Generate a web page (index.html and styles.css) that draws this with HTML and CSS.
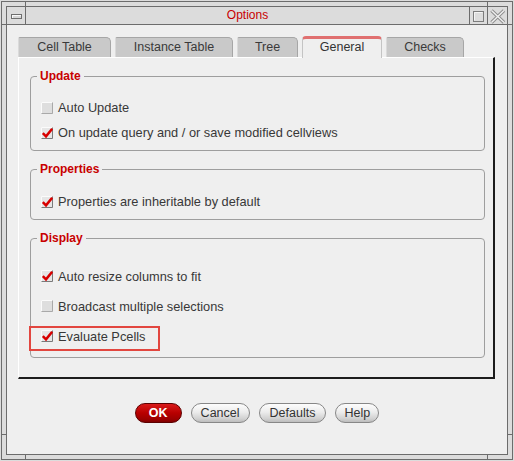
FILE: index.html
```html
<!DOCTYPE html>
<html>
<head>
<meta charset="utf-8">
<title>Options</title>
<link rel="stylesheet" href="styles.css">
</head>
<body>
<div class="window">
  <span class="tick tick-v tick-top-l"></span>
  <span class="tick tick-v tick-top-r"></span>
  <span class="tick tick-v tick-bot-l"></span>
  <span class="tick tick-v tick-bot-r"></span>
  <span class="tick tick-h tick-left-t"></span>
  <span class="tick tick-h tick-right-t"></span>
  <span class="tick tick-h tick-left-b"></span>
  <span class="tick tick-h tick-right-b"></span>
  <div class="frame-inner">
    <div class="titlebar">
      <div class="tb-menu"><span class="menu-glyph"></span></div>
      <div class="tb-title">Options</div>
      <div class="tb-btn tb-max">
        <svg width="17" height="17" viewBox="0 0 17 17"><rect x="3.5" y="4.5" width="10" height="10" fill="none" stroke="#7c7c7c"/><path d="M4.5 13.5V5.5H12.5" fill="none" stroke="#f4f4f4"/></svg>
      </div>
      <div class="tb-btn tb-close">
        <svg width="19" height="17" viewBox="0 0 19 17"><path d="M3.5 3.5L16 15.5M16 3.5L3.5 15.5" stroke="#8e8e8e" stroke-width="3.4" fill="none"/><path d="M3.5 3.5L16 15.5M16 3.5L3.5 15.5" stroke="#f0f0f0" stroke-width="1.4" fill="none"/></svg>
      </div>
    </div>
    <div class="client">
      <div class="tabs">
        <div class="tab tab-cell">Cell Table</div>
        <div class="tab tab-inst">Instance Table</div>
        <div class="tab tab-tree">Tree</div>
        <div class="tab tab-gen tab-active">General</div>
        <div class="tab tab-chk">Checks</div>
      </div>
      <div class="panel">
        <fieldset class="group">
          <legend>Update</legend>
          <label class="row">
            <svg class="cb" width="12" height="12" viewBox="0 0 12 12"><rect x="0" y="0" width="12" height="12" fill="#dedede"/><path d="M0.5 11.5V0.5H11.5" fill="none" stroke="#fbfbfb"/><path d="M0.5 11.5H11.5V0.5" fill="none" stroke="#a9a9a9"/></svg>
            <span>Auto Update</span>
          </label>
          <label class="row">
            <svg class="cb" width="12" height="12" viewBox="0 0 12 12"><rect x="0" y="0" width="12" height="12" fill="#e6e6e6"/><path d="M0.5 11.5V0.5H11.5" fill="none" stroke="#fbfbfb"/><path d="M0.5 11.5H11.5V0.5" fill="none" stroke="#7a7a7a"/><path d="M1.8 6.2L5 9.4L11.2 1.8" fill="none" stroke="#d80000" stroke-width="2.5"/></svg>
            <span>On update query and / or save modified cellviews</span>
          </label>
        </fieldset>
        <fieldset class="group group-props">
          <legend>Properties</legend>
          <label class="row">
            <svg class="cb" width="12" height="12" viewBox="0 0 12 12"><rect x="0" y="0" width="12" height="12" fill="#e6e6e6"/><path d="M0.5 11.5V0.5H11.5" fill="none" stroke="#fbfbfb"/><path d="M0.5 11.5H11.5V0.5" fill="none" stroke="#7a7a7a"/><path d="M1.8 6.2L5 9.4L11.2 1.8" fill="none" stroke="#d80000" stroke-width="2.5"/></svg>
            <span>Properties are inheritable by default</span>
          </label>
        </fieldset>
        <fieldset class="group group-display">
          <legend>Display</legend>
          <label class="row row-tall">
            <svg class="cb" width="12" height="12" viewBox="0 0 12 12"><rect x="0" y="0" width="12" height="12" fill="#e6e6e6"/><path d="M0.5 11.5V0.5H11.5" fill="none" stroke="#fbfbfb"/><path d="M0.5 11.5H11.5V0.5" fill="none" stroke="#7a7a7a"/><path d="M1.8 6.2L5 9.4L11.2 1.8" fill="none" stroke="#d80000" stroke-width="2.5"/></svg>
            <span>Auto resize columns to fit</span>
          </label>
          <label class="row row-tall">
            <svg class="cb" width="12" height="12" viewBox="0 0 12 12"><rect x="0" y="0" width="12" height="12" fill="#dedede"/><path d="M0.5 11.5V0.5H11.5" fill="none" stroke="#fbfbfb"/><path d="M0.5 11.5H11.5V0.5" fill="none" stroke="#a9a9a9"/></svg>
            <span>Broadcast multiple selections</span>
          </label>
          <label class="row row-tall row-highlight">
            <svg class="cb" width="12" height="12" viewBox="0 0 12 12"><rect x="0" y="0" width="12" height="12" fill="#e6e6e6"/><path d="M0.5 11.5V0.5H11.5" fill="none" stroke="#fbfbfb"/><path d="M0.5 11.5H11.5V0.5" fill="none" stroke="#7a7a7a"/><path d="M1.8 6.2L5 9.4L11.2 1.8" fill="none" stroke="#d80000" stroke-width="2.5"/></svg>
            <span>Evaluate Pcells</span>
          </label>
        </fieldset>
      </div>
      <div class="buttons">
        <button class="btn btn-ok">OK</button>
        <button class="btn">Cancel</button>
        <button class="btn btn-wide">Defaults</button>
        <button class="btn btn-narrow">Help</button>
      </div>
    </div>
  </div>
</div>
</body>
</html>
```
FILE: styles.css
```css
* { box-sizing: border-box; }
html, body { margin: 0; padding: 0; }
body {
  width: 514px;
  height: 461px;
  overflow: hidden;
  background: #dcdcdc;
  font-family: "Liberation Sans", Arial, sans-serif;
  color: #333;
}
.window {
  position: relative;
  margin: 1px;
  width: 512px;
  height: 459px;
  border: 1px solid #6c6c6c;
  padding: 4px;
  background: #dcdcdc;
}
.tick { position: absolute; background: #6c6c6c; }
.tick-v { width: 1px; height: 4px; }
.tick-h { width: 4px; height: 1px; }
.tick-top-l { left: 23px; top: 0; }
.tick-top-r { left: 485px; top: 0; }
.tick-bot-l { left: 23px; bottom: 0; }
.tick-bot-r { left: 485px; bottom: 0; }
.tick-left-t { left: 0; top: 22px; }
.tick-right-t { right: 0; top: 22px; }
.tick-left-b { left: 0; top: 432px; }
.tick-right-b { right: 0; top: 432px; }

.frame-inner {
  height: 100%;
  border: 1px solid #6c6c6c;
  display: flex;
  flex-direction: column;
  background: #efefef;
}
.titlebar {
  display: flex;
  height: 18px;
  flex: none;
  border-bottom: 1px solid #6c6c6c;
  background: #dcdcdc;
}
.tb-menu {
  width: 19px;
  border-right: 1px solid #6c6c6c;
  padding: 7px 0 0 4px;
}
.menu-glyph {
  display: block;
  width: 11px;
  height: 5px;
  border: 1px solid #6e6e6e;
  background: #d6d6d6;
  box-shadow: inset 1px 1px 0 #f8f8f8;
}
.tb-title {
  flex: 1;
  text-align: center;
  color: #c80000;
  font-size: 12px;
  line-height: 17px;
}
.tb-btn { border-left: 1px solid #6c6c6c; }
.tb-btn svg { display: block; }
.tb-max { width: 18px; }
.tb-close { width: 20px; }

.client {
  flex: 1;
  padding-top: 11px;
}
.tabs {
  display: flex;
  align-items: flex-end;
  gap: 4px;
  height: 21px;
  margin-left: 11px;
  position: relative;
  z-index: 1;
}
.tab {
  flex: none;
  height: 20px;
  padding: 0;
  text-align: center;
  font-size: 12.5px;
  line-height: 19px;
  color: #3a3a3a;
  background: #c9c9c9;
  border: 1px solid #a6a6a6;
  border-bottom: none;
  border-left-color: #dadada;
  border-radius: 2px 5px 0 0;
  white-space: nowrap;
}
.tab-cell { width: 93px; }
.tab-inst { width: 118px; }
.tab-tree { width: 61px; }
.tab-gen { width: 80px; }
.tab-chk { width: 78px; }
.tab-active {
  height: 22px;
  margin-bottom: -1px;
  line-height: 16px;
  background: #efefef;
  border: 1px solid #c4c4c4;
  border-top: 3px solid #e07070;
  border-bottom: none;
  border-radius: 4px 4px 0 0;
  color: #333;
}

.panel {
  height: 322px;
  margin: 0 12px 0 11px;
  padding: 12px 8px 0 11px;
  border-top: 1px solid #ffffff;
  border-left: 1px solid #ffffff;
  border-right: 2px solid #1c1c1c;
  border-bottom: 2px solid #1c1c1c;
}
.group {
  margin: 0 0 12px;
  padding: 12px 0 5px;
  min-width: 0;
  border: 1px solid #9e9e9e;
  border-radius: 4px;
}
.group legend {
  margin-left: 6px;
  padding: 0 3px;
  font-size: 12px;
  font-weight: bold;
  line-height: 13px;
  color: #c80000;
}
.group-props { padding-top: 13px; }
.group-display { padding-top: 16px; padding-bottom: 6px; margin-bottom: 0; }

.row {
  display: flex;
  align-items: center;
  gap: 5px;
  height: 25px;
  padding-left: 10px;
  font-size: 12.8px;
  color: #383838;
  white-space: nowrap;
}
.row-tall { height: 30px; }
.row-highlight { position: relative; }
.row-highlight::after {
  content: "";
  position: absolute;
  left: -2px;
  top: 5px;
  width: 127px;
  height: 21px;
  border: 2px solid #e2463f;
}
.cb { flex: none; display: block; }

.buttons {
  display: flex;
  justify-content: center;
  gap: 9px;
  padding-top: 24px;
}
.btn {
  height: 20px;
  min-width: 44px;
  padding: 0 9px;
  border: 1px solid #878787;
  border-radius: 10px;
  font-family: "Liberation Sans", Arial, sans-serif;
  font-size: 12.5px;
  line-height: 18px;
  color: #333;
  background: linear-gradient(#fdfdfd, #ececec 45%, #d2d2d2 80%, #bdbdbd);
}
.btn-wide { padding: 0 10px; }
.btn-narrow { padding: 0 8px; }
.btn-ok {
  min-width: 47px;
  font-weight: bold;
  color: #fff;
  border-color: #5c0000;
  background: linear-gradient(#d91a1a, #b80000 50%, #9c0000 85%, #7e0000);
}
```
